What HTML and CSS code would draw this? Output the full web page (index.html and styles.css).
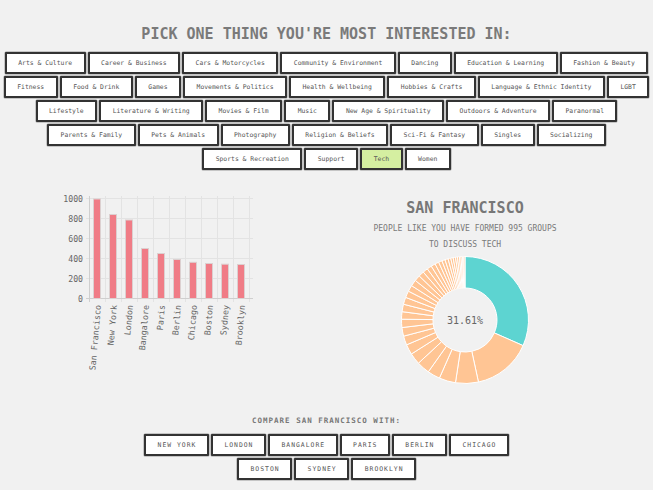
FILE: index.html
```html
<!DOCTYPE html>
<html lang="en">
<head>
<meta charset="utf-8">
<title>Pick a topic</title>
<link rel="stylesheet" href="styles.css">
</head>
<body>
<h1 class="title">PICK ONE THING YOU'RE MOST INTERESTED IN:</h1>
<div class="topics">
  <button class="chip">Arts &amp; Culture</button>
  <button class="chip">Career &amp; Business</button>
  <button class="chip">Cars &amp; Motorcycles</button>
  <button class="chip">Community &amp; Environment</button>
  <button class="chip">Dancing</button>
  <button class="chip">Education &amp; Learning</button>
  <button class="chip">Fashion &amp; Beauty</button>
  <button class="chip">Fitness</button>
  <button class="chip">Food &amp; Drink</button>
  <button class="chip">Games</button>
  <button class="chip">Movements &amp; Politics</button>
  <button class="chip">Health &amp; Wellbeing</button>
  <button class="chip">Hobbies &amp; Crafts</button>
  <button class="chip">Language &amp; Ethnic Identity</button>
  <button class="chip">LGBT</button>
  <button class="chip">Lifestyle</button>
  <button class="chip">Literature &amp; Writing</button>
  <button class="chip">Movies &amp; Film</button>
  <button class="chip">Music</button>
  <button class="chip">New Age &amp; Spirituality</button>
  <button class="chip">Outdoors &amp; Adventure</button>
  <button class="chip">Paranormal</button>
  <button class="chip">Parents &amp; Family</button>
  <button class="chip">Pets &amp; Animals</button>
  <button class="chip">Photography</button>
  <button class="chip">Religion &amp; Beliefs</button>
  <button class="chip">Sci-Fi &amp; Fantasy</button>
  <button class="chip">Singles</button>
  <button class="chip">Socializing</button>
  <button class="chip">Sports &amp; Recreation</button>
  <button class="chip">Support</button>
  <button class="chip chip-active">Tech</button>
  <button class="chip">Women</button>
</div>

<section class="charts">
  <svg class="bar-chart" width="200" height="190" viewBox="0 0 200 190">
    <g class="grid">
      <line x1="28" y1="8.5" x2="195" y2="8.5"/>
      <line x1="28" y1="28.5" x2="195" y2="28.5"/>
      <line x1="28" y1="48.5" x2="195" y2="48.5"/>
      <line x1="28" y1="68.5" x2="195" y2="68.5"/>
      <line x1="28" y1="88.5" x2="195" y2="88.5"/>
      <line x1="47.5" y1="6" x2="47.5" y2="112"/>
      <line x1="63.5" y1="6" x2="63.5" y2="112"/>
      <line x1="79.5" y1="6" x2="79.5" y2="112"/>
      <line x1="95.5" y1="6" x2="95.5" y2="112"/>
      <line x1="111.5" y1="6" x2="111.5" y2="112"/>
      <line x1="127.5" y1="6" x2="127.5" y2="112"/>
      <line x1="143.5" y1="6" x2="143.5" y2="112"/>
      <line x1="159.5" y1="6" x2="159.5" y2="112"/>
      <line x1="175.5" y1="6" x2="175.5" y2="112"/>
      <line x1="191.5" y1="6" x2="191.5" y2="112"/>
    </g>
    <g class="axis">
      <line x1="28" y1="108.5" x2="195" y2="108.5"/>
      <line x1="31.5" y1="6" x2="31.5" y2="112"/>
    </g>
    <g class="ticks">
      <text x="25" y="11.5">1000</text>
      <text x="25" y="31.5">800</text>
      <text x="25" y="51.5">600</text>
      <text x="25" y="71.5">400</text>
      <text x="25" y="91.5">200</text>
      <text x="25" y="111.5">0</text>
    </g>
    <g class="bars">
      <rect x="35.5" y="9" width="7" height="99.5"/>
      <rect x="51.5" y="24.5" width="7" height="84"/>
      <rect x="67.5" y="30" width="7" height="78.5"/>
      <rect x="83.5" y="58.5" width="7" height="50"/>
      <rect x="99.5" y="63.5" width="7" height="45"/>
      <rect x="115.5" y="69.5" width="7" height="39"/>
      <rect x="131.5" y="72.3" width="7" height="36.2"/>
      <rect x="147.5" y="73.5" width="7" height="35"/>
      <rect x="163.5" y="74.2" width="7" height="34.3"/>
      <rect x="179.5" y="74.5" width="7" height="34"/>
    </g>
    <g class="labels">
      <text x="40" y="115" transform="rotate(-85 40 115)">San Francisco</text>
      <text x="56" y="115" transform="rotate(-85 56 115)">New York</text>
      <text x="72" y="115" transform="rotate(-85 72 115)">London</text>
      <text x="88" y="115" transform="rotate(-85 88 115)">Bangalore</text>
      <text x="104" y="115" transform="rotate(-85 104 115)">Paris</text>
      <text x="120" y="115" transform="rotate(-85 120 115)">Berlin</text>
      <text x="136" y="115" transform="rotate(-85 136 115)">Chicago</text>
      <text x="152" y="115" transform="rotate(-85 152 115)">Boston</text>
      <text x="168" y="115" transform="rotate(-85 168 115)">Sydney</text>
      <text x="184" y="115" transform="rotate(-85 184 115)">Brooklyn</text>
    </g>
  </svg>

  <div class="summary">
    <h2 class="city">SAN FRANCISCO</h2>
    <p class="blurb">PEOPLE LIKE YOU HAVE FORMED 995 GROUPS<br>TO DISCUSS TECH</p>
    <svg id="donut" class="donut" width="200" height="130" viewBox="0 0 200 130">
      <g id="donut-slices"></g>
      <text class="pct" x="100" y="65">31.61%</text>
    </svg>
  </div>
</section>

<h3 class="compare-title">COMPARE SAN FRANCISCO WITH:</h3>
<div class="compare">
  <button class="chip chip-city">New York</button>
  <button class="chip chip-city">London</button>
  <button class="chip chip-city">Bangalore</button>
  <button class="chip chip-city">Paris</button>
  <button class="chip chip-city">Berlin</button>
  <button class="chip chip-city">Chicago</button>
  <button class="chip chip-city">Boston</button>
  <button class="chip chip-city">Sydney</button>
  <button class="chip chip-city">Brooklyn</button>
</div>
<script src="script.js"></script>
</body>
</html>
```

FILE: styles.css
```css
* { box-sizing: border-box; }

html, body {
  margin: 0;
  padding: 0;
  background: #f1f1f1;
  font-family: "DejaVu Sans Mono", "Liberation Mono", monospace;
  color: #555;
}

.title {
  margin: 0;
  padding-top: 25px;
  font-size: 15px;
  line-height: 18px;
  font-weight: bold;
  color: #7a7a7a;
  text-align: center;
}

.topics,
.compare {
  display: flex;
  flex-wrap: wrap;
  justify-content: center;
}

.topics { margin-top: 8px; }

.chip {
  margin: 1px;
  height: 22px;
  padding: 0 11.5px;
  border: 2px solid #333;
  border-radius: 1px;
  background: #fff;
  font-family: "DejaVu Sans Mono", "Liberation Mono", monospace;
  font-size: 6.4px;
  line-height: 18px;
  color: #555;
  white-space: nowrap;
  cursor: pointer;
  box-shadow: 0 0 0 0.5px #999;
}

.chip-active { background: #d5efa1; }

.chip-city {
  padding: 0 10.5px 0 11.5px;
  text-transform: uppercase;
  letter-spacing: 1px;
}

.charts {
  display: flex;
  align-items: flex-start;
  gap: 107px;
  padding-left: 58px;
  margin-top: 19px;
}

.bar-chart { display: block; }

.grid line { stroke: #e3e3e3; stroke-width: 1; }
.axis line { stroke: #cfcfcf; stroke-width: 1; }

.ticks text {
  font-family: "DejaVu Sans Mono", monospace;
  font-size: 8.2px;
  fill: #666;
  text-anchor: end;
}

.labels text {
  font-family: "DejaVu Sans Mono", monospace;
  font-size: 8.4px;
  fill: #666;
  text-anchor: end;
  dominant-baseline: central;
}

.bars rect {
  fill: #f07c86;
  stroke: #dcd0d0;
  stroke-width: 1;
}

.summary {
  width: 200px;
  text-align: center;
  padding-top: 9px;
}

.city {
  margin: 0;
  font-size: 15px;
  line-height: 18px;
  font-weight: bold;
  color: #777;
}

.blurb {
  margin: 4px 0 0;
  font-size: 8px;
  line-height: 16px;
  color: #7a7a7a;
  white-space: nowrap;
}

.donut {
  display: block;
  margin-top: 2px;
}

.slice {
  stroke: #fff;
  stroke-width: 1;
}
.slice-main { fill: #5dd4d1; }
.slice-rest { fill: #ffc594; }

.pct {
  font-family: "DejaVu Sans Mono", monospace;
  font-size: 10px;
  fill: #666;
  text-anchor: middle;
  dominant-baseline: central;
}

.compare-title {
  margin: 30px 0 0;
  font-size: 7.5px;
  line-height: 12px;
  letter-spacing: 1px;
  font-weight: bold;
  color: #777;
  text-align: center;
}

.compare {
  width: 390px;
  margin: 6px auto 0;
}
```

FILE: script.js
```js
(function () {
  var values = [31.61, 15.0, 5.8, 4.2, 3.2,
    3.3, 2.9, 2.6, 2.3, 2.2, 2.1, 1.9, 1.9, 1.8, 1.7, 1.6, 1.6, 1.5, 1.4,
    1.3, 1.2, 1.1, 1.0, 0.9, 0.8, 0.8, 0.7, 0.6, 0.6, 0.5, 0.5, 0.4, 0.4, 0.3, 0.3];
  var total = values.reduce(function (a, b) { return a + b; }, 0);
  var cx = 100, cy = 65, R = 63.5, r = 32;
  var g = document.getElementById('donut-slices');
  var ns = 'http://www.w3.org/2000/svg';
  function pt(rad, a) {
    var t = a * Math.PI / 180;
    return (cx + rad * Math.sin(t)).toFixed(3) + ' ' + (cy - rad * Math.cos(t)).toFixed(3);
  }
  var start = 0;
  values.forEach(function (v, i) {
    var sweep = v / total * 360;
    var end = start + sweep;
    var large = sweep > 180 ? 1 : 0;
    var d = 'M ' + pt(R, start) +
      ' A ' + R + ' ' + R + ' 0 ' + large + ' 1 ' + pt(R, end) +
      ' L ' + pt(r, end) +
      ' A ' + r + ' ' + r + ' 0 ' + large + ' 0 ' + pt(r, start) + ' Z';
    var p = document.createElementNS(ns, 'path');
    p.setAttribute('d', d);
    p.setAttribute('class', 'slice ' + (i === 0 ? 'slice-main' : 'slice-rest'));
    g.appendChild(p);
    start = end;
  });
})();
```
